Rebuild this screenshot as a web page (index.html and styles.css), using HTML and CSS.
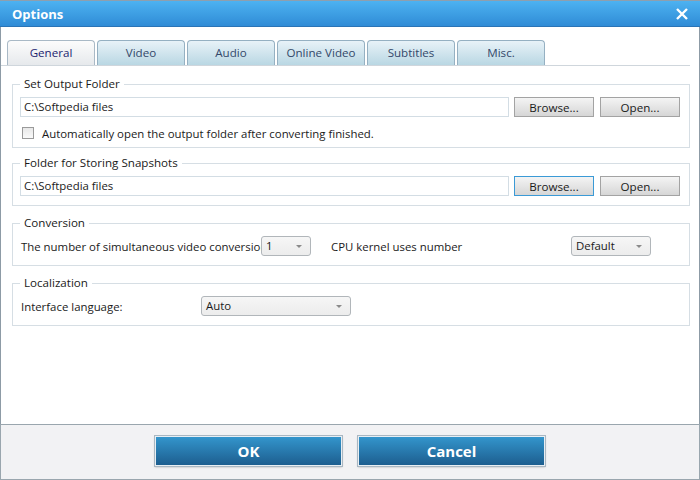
FILE: index.html
```
<!DOCTYPE html>
<html lang="en">
<head>
    <meta charset="UTF-8">
    <title>Options</title>
    <link rel="stylesheet" href="styles.css">
</head>
<body>
    <div class="window">
        <!-- Title bar -->
        <div class="titlebar">
            <span class="title">Options</span>
            <svg class="close" width="14" height="14" viewBox="0 0 14 14">
                <path d="M2 2 L12 12 M12 2 L2 12" stroke="#fff" stroke-width="2.4" fill="none"/>
            </svg>
        </div>

        <div class="content">
            <!-- Tabs -->
            <ul class="tabs">
                <li class="tab active">General</li>
                <li class="tab">Video</li>
                <li class="tab">Audio</li>
                <li class="tab">Online Video</li>
                <li class="tab">Subtitles</li>
                <li class="tab">Misc.</li>
            </ul>

            <div class="panel">
                <fieldset class="group">
                    <legend>Set Output Folder</legend>
                    <div class="row">
                        <div class="path">C:\Softpedia files</div>
                        <button class="btn">Browse...</button>
                        <button class="btn">Open...</button>
                    </div>
                    <div class="row check-row">
                        <span class="checkbox"></span>
                        <span>Automatically open the output folder after converting finished.</span>
                    </div>
                </fieldset>

                <fieldset class="group">
                    <legend>Folder for Storing Snapshots</legend>
                    <div class="row">
                        <div class="path">C:\Softpedia files</div>
                        <button class="btn focused">Browse...</button>
                        <button class="btn">Open...</button>
                    </div>
                </fieldset>

                <fieldset class="group">
                    <legend>Conversion</legend>
                    <div class="row">
                        <span class="label clip">The number of simultaneous video conversions</span>
                        <div class="select sel-small">1<span class="arrow"></span></div>
                        <span class="label cpu">CPU kernel uses number</span>
                        <div class="select sel-default">Default<span class="arrow"></span></div>
                    </div>
                </fieldset>

                <fieldset class="group">
                    <legend>Localization</legend>
                    <div class="row">
                        <span class="label lang">Interface language:</span>
                        <div class="select sel-lang">Auto<span class="arrow"></span></div>
                    </div>
                </fieldset>
            </div>
        </div>

        <!-- Bottom buttons -->
        <div class="footer">
            <button class="big-btn">OK</button>
            <button class="big-btn">Cancel</button>
        </div>
    </div>
</body>
</html>
```

FILE: styles.css
```
body {
    margin: 0;
    font-family: "Open Sans", "Noto Sans", sans-serif;
    font-size: 11.4px;
    color: #1a1a1a;
}
.window {
    width: 700px;
    height: 480px;
    box-sizing: border-box;
    display: flex;
    flex-direction: column;
    background-color: white;
}
.titlebar {
    height: 27px;
    box-sizing: border-box;
    border-top: 1px solid #8e9fae;
    background: linear-gradient(#4db2f1, #2e8ad5);
    box-shadow: inset 0 -1px 0 #2a74b6;
    display: flex;
    align-items: center;
    justify-content: space-between;
    padding: 0 11px 0 12px;
}
.title {
    color: white;
    font-weight: bold;
    font-size: 13px;
}
.close {
    display: block;
}
.content {
    flex: 1;
    border-left: 1px solid #8d9ba6;
    border-right: 1px solid #8d9ba6;
}
.tabs {
    list-style-type: none;
    margin: 13px 9px 0 0;
    padding: 0 0 0 6px;
    display: flex;
    gap: 2px;
    border-bottom: 1px solid #cfd6dc;
}
.tab {
    width: 88px;
    height: 25px;
    box-sizing: border-box;
    border: 1px solid #95b0c2;
    border-bottom: none;
    border-radius: 4px 4px 0 0;
    background: linear-gradient(#e8f2f8, #b9d7e3);
    color: #33486a;
    font-size: 11.6px;
    text-align: center;
    line-height: 24px;
}
.tab.active {
    background: linear-gradient(#fcfcfc, #e6e9ec);
    border-color: #a9b9c6;
    color: #1b2470;
}
.panel {
    padding: 10px 9px 0 11px;
}
.group {
    margin: 0 0 9px 0;
    padding: 5px 9px 9px 7px;
    border: 1px solid #d6dee4;
}
.group:first-child {
    margin-bottom: 7px;
}
.group legend {
    padding: 0 4px;
    font-size: 11.6px;
    line-height: 16px;
    color: #1a1a1a;
}
.row {
    display: flex;
    align-items: center;
    height: 20px;
}
.path {
    flex: 1;
    height: 20px;
    box-sizing: border-box;
    border: 1px solid #d3dde4;
    padding-left: 3px;
    line-height: 18px;
    margin-right: 5px;
}
.btn {
    width: 80px;
    height: 20px;
    box-sizing: border-box;
    border: 1px solid #a3a3a3;
    background: linear-gradient(#f4f4f4, #d6d6d6);
    font-family: inherit;
    font-size: 11.6px;
    color: #1a1a1a;
    padding: 0;
    margin-left: 6px;
}
.btn:nth-of-type(1) {
    margin-left: 0;
}
.btn.focused {
    border-color: #3b9ad6;
}
.check-row {
    margin-top: 6px;
    margin-bottom: -5px;
}
.checkbox {
    width: 12px;
    height: 12px;
    box-sizing: border-box;
    border: 1px solid #9a9a9a;
    background: linear-gradient(#e8e8e8, #fafafa);
    margin: 0 8px 0 2px;
}
.label {
    white-space: nowrap;
}
.clip {
    width: 240px;
    overflow: hidden;
    padding-left: 1px;
}
.cpu {
    margin-left: 20px;
    width: 240px;
}
.lang {
    width: 180px;
    padding-left: 1px;
}
.select {
    position: relative;
    height: 20px;
    box-sizing: border-box;
    border: 1px solid #b1b6ba;
    border-radius: 3px;
    background: linear-gradient(#f6f6f6, #ececec);
    line-height: 18px;
    padding-left: 4px;
}
.sel-small {
    width: 50px;
}
.sel-default {
    width: 80px;
}
.sel-lang {
    width: 150px;
}
.arrow {
    position: absolute;
    right: 8px;
    top: 8px;
    border-left: 3px solid transparent;
    border-right: 3px solid transparent;
    border-top: 3px solid #8a8a8a;
}
.footer {
    height: 56px;
    box-sizing: border-box;
    border: 1px solid #9aa6ae;
    background-color: #f2f2f4;
    display: flex;
    justify-content: center;
    align-items: flex-start;
    gap: 16px;
    padding-top: 11px;
}
.big-btn {
    width: 187px;
    height: 30px;
    border: 1px solid #e8eef3;
    box-shadow: 0 0 0 1px #a9b7c2, 0 1px 2px rgba(0, 0, 0, 0.3);
    background: linear-gradient(#3395cc, #1d5e8f);
    color: white;
    font-family: inherit;
    font-weight: bold;
    font-size: 15px;
    padding: 0;
}
```
